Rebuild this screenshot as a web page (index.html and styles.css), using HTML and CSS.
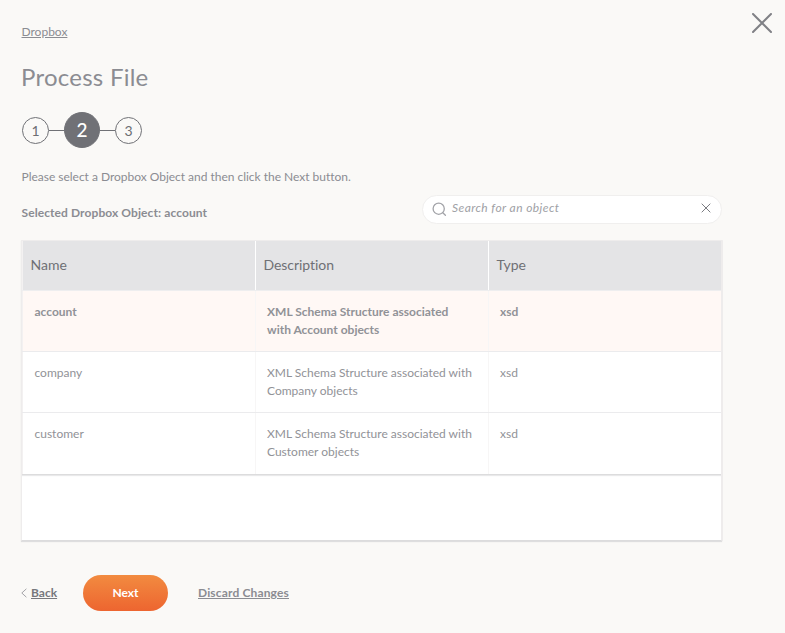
FILE: index.html
```html
<!DOCTYPE html>
<html lang="en">
<head>
<meta charset="utf-8">
<title>Process File</title>
<link rel="stylesheet" href="styles.css">
</head>
<body>
<main class="wizard">
  <button class="close" aria-label="Close"><svg width="20" height="20" viewBox="0 0 20 20"><path d="M1 1L19 19M19 1L1 19"/></svg></button>
  <a class="crumb">Dropbox</a>
  <h1>Process File</h1>
  <div class="steps">
    <span class="step">1</span><i class="link"></i><span class="step current">2</span><i class="link"></i><span class="step">3</span>
  </div>
  <p class="hint">Please select a Dropbox Object and then click the Next button.</p>
  <div class="toolbar">
    <strong class="selected">Selected Dropbox Object: account</strong>
    <div class="search">
      <svg class="lens" width="15" height="15" viewBox="0 0 15 15"><circle cx="6.7" cy="6.7" r="5.6"/><path d="M10.8 10.8L13.4 13.2"/></svg>
      <span class="placeholder">Search for an object</span>
      <svg class="clear" width="10" height="10" viewBox="0 0 10 10"><path d="M.7 .7L9.3 9.3M9.3 .7L.7 9.3"/></svg>
    </div>
  </div>
  <div class="panel">
    <div class="row head"><div>Name</div><div>Description</div><div>Type</div></div>
    <div class="row active"><div>account</div><div>XML Schema Structure associated<br>with Account objects</div><div>xsd</div></div>
    <div class="row"><div>company</div><div>XML Schema Structure associated with<br>Company objects</div><div>xsd</div></div>
    <div class="row last"><div>customer</div><div>XML Schema Structure associated with<br>Customer objects</div><div>xsd</div></div>
  </div>
  <div class="actions">
    <svg class="chevron" width="6" height="10" viewBox="0 0 6 10"><path d="M5.4 .8L.8 5L5.4 9.2"/></svg>
    <a class="back">Back</a>
    <button class="next">Next</button>
    <a class="discard">Discard Changes</a>
  </div>
</main>
</body>
</html>
```
FILE: styles.css
```css
* { box-sizing: border-box; }
body {
  margin: 0;
  background: #faf9f7;
  color: #8b8c92;
  font: 12px/18px Lato, "Open Sans", sans-serif;
}
.wizard { position: relative; width: 785px; height: 633px; padding: 23px 62px 0 21px; overflow: hidden; }
button { border: 0; padding: 0; font: inherit; }
svg { display: block; fill: none; stroke: #7b7c81; flex: none; }
.close { position: absolute; top: 13px; right: 13px; background: none; }
.close svg { stroke: #808186; stroke-width: 2; stroke-linecap: round; }
.crumb { display: block; width: max-content; margin-left: .5px; text-decoration: underline; }
h1 { margin: 21px 0 0; padding-bottom: 1px; font-size: 24px; line-height: 30px; font-weight: 400; letter-spacing: .25px; }
.steps { display: flex; align-items: center; height: 36px; margin: 19px 0 0 1px; color: #6d6e73; }
.step { display: flex; align-items: center; justify-content: center; width: 27px; height: 27px; border: 1px solid #707176; border-radius: 50%; font-size: 14px; padding-top: 1px; }
.current { width: 36px; height: 36px; padding: 0; background: #707176; color: #fff; font-size: 19px; font-weight: 500; }
.link { width: 15px; height: 1px; background: #707176; }
.hint { margin: 20px 0 0 .5px; letter-spacing: -.02px; }
.toolbar { display: flex; justify-content: space-between; height: 29px; margin-top: 9px; width: 701px; }
.selected { margin: 9px 0 0 .5px; line-height: 18px; letter-spacing: .09px; }
.search { display: flex; width: 300px; height: 29px; padding: 0 10px 0 9px; background: #fff; border: 1px solid #f0efee; border-radius: 15px; }
.lens { margin-top: 6px; stroke: #a2a3a8; stroke-width: 1.3; stroke-linecap: round; }
.placeholder { flex: 1; margin: 3px 0 0 5px; color: #a0a1a6; font-style: italic; letter-spacing: .42px; }
.clear { margin: 7px 0 0; }
.panel { width: 701px; height: 301px; margin-top: 16px; background: #fff; border: 1px solid #eeecec; border-bottom-color: #dcdcdd; box-shadow: 0 1px 1px #dededf, 1px 0 0 #f1efef; }
.row { display: grid; grid-template-columns: repeat(3, 233px); height: 61px; border-bottom: 1px solid #ebebed; }
.row div { padding: 12px 0 0 11px; border-left: 1px solid #f7f6f6; color: #919297; }
.row div:first-child { border-color: #f3f1f1; padding-left: 11.5px; }
.head { height: 50px; background: #e4e4e6; border-bottom-color: #eeeeef; }
.head div { padding: 15px 0 0 7.5px; border-color: #fff; font-size: 14px; color: #6f7075; }
.head div:first-child { padding-left: 7.5px; }
.head div:nth-child(2) { letter-spacing: -.05px; }
.active { background: #fff8f5; font-weight: 700; }
.last { height: 62px; border-bottom-color: #dcdcdd; box-shadow: 0 1px 1px #e9e9ea; }
.actions { display: flex; align-items: center; height: 36px; margin-top: 34px; font-weight: 700; }
.back, .discard { text-decoration: underline; }
.back { width: 26px; margin-left: 4px; color: #77787d; }
.discard { letter-spacing: .15px; }
.chevron { stroke: #a3a4a8; }
.next { width: 85px; height: 36px; margin: 0 30px 0 26px; border-radius: 18px; background: linear-gradient(#f28b40, #ed6530); color: #fff; }
```
